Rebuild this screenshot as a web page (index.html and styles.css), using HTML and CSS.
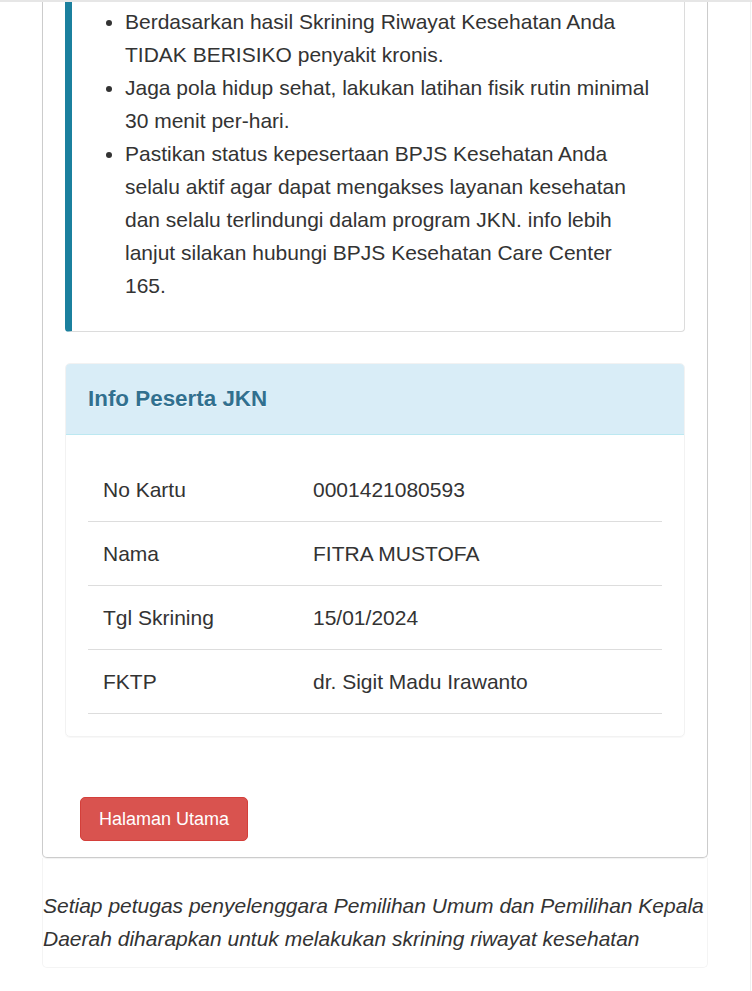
FILE: index.html
```html
<!DOCTYPE html>
<html lang="id">
<head>
<meta charset="utf-8">
<title>Hasil Skrining</title>
<link rel="stylesheet" href="styles.css">
</head>
<body>
<div class="topbar"></div>
<div class="shell">
  <div class="page">
    <div class="panel-main">
      <div class="callout">
        <ul>
          <li>Berdasarkan hasil Skrining Riwayat Kesehatan Anda TIDAK BERISIKO penyakit kronis.</li>
          <li>Jaga pola hidup sehat, lakukan latihan fisik rutin minimal 30 menit per-hari.</li>
          <li>Pastikan status kepesertaan BPJS Kesehatan Anda selalu aktif agar dapat mengakses layanan kesehatan dan selalu terlindungi dalam program JKN. info lebih lanjut silakan hubungi BPJS Kesehatan Care Center 165.</li>
        </ul>
      </div>
      <div class="info-panel">
        <div class="info-head"><h3>Info Peserta JKN</h3></div>
        <div class="info-body">
          <table class="info-table">
            <tr><td class="lbl">No Kartu</td><td>0001421080593</td></tr>
            <tr><td class="lbl">Nama</td><td>FITRA MUSTOFA</td></tr>
            <tr><td class="lbl">Tgl Skrining</td><td>15/01/2024</td></tr>
            <tr><td class="lbl">FKTP</td><td>dr. Sigit Madu Irawanto</td></tr>
          </table>
        </div>
      </div>
      <div class="actions"><a class="btn-danger" href="#">Halaman Utama</a></div>
    </div>
    <div class="footer-note">
      <p>Setiap petugas penyelenggara Pemilihan Umum dan Pemilihan Kepala Daerah diharapkan untuk melakukan skrining riwayat kesehatan</p>
    </div>
  </div>
</div>
</body>
</html>
```

FILE: styles.css
```css
html, body {
  margin: 0;
  padding: 0;
  background: #fff;
}
body {
  font-family: "Liberation Sans", Arial, sans-serif;
  font-size: 21px;
  line-height: 33px;
  color: #333;
}
.topbar {
  height: 2px;
  background: #e6e6e6;
}
.shell {
  width: 750px;
  min-height: 989px;
  border-right: 1px solid #efefef;
}
.page {
  padding-left: 42px;
  width: 666px;
}
.panel-main {
  border: 1px solid #cccccc;
  border-top: 0;
  border-radius: 0 0 5px 5px;
  padding: 0 22px;
  box-shadow: 0 1px 1px rgba(0, 0, 0, 0.06);
}
.callout {
  border: 1px solid #dcdcdc;
  border-top: 0;
  border-left: 7px solid #1b809e;
  border-radius: 0 0 4px 4px;
  padding: 3px 32px 29px 14px;
}
.callout ul {
  margin: 0;
  padding-left: 39px;
}
.info-panel {
  margin-top: 31px;
  margin-bottom: 30px;
  border: 1px solid #f2f2f2;
  border-radius: 5px;
  box-shadow: 0 1px 1px rgba(0, 0, 0, 0.03);
  overflow: hidden;
}
.info-head {
  background: #d9edf7;
  border-bottom: 1px solid #bce8f1;
  padding: 22px 22px 23px;
}
.info-head h3 {
  margin: 0;
  font-size: 22.4px;
  line-height: 25px;
  font-weight: bold;
  color: #31708f;
  text-shadow: 0 1px 0 rgba(255, 255, 255, 0.6);
}
.info-body {
  padding: 23px 22px 22px;
}
.info-table {
  width: 100%;
  border-collapse: collapse;
  table-layout: fixed;
}
.info-table td {
  padding: 15px;
  line-height: 33px;
  border-bottom: 1px solid #dddddd;
  vertical-align: top;
}
.info-table td.lbl {
  width: 210px;
  box-sizing: border-box;
}
.actions {
  display: flex;
  padding: 30px 15px 16px;
}
.btn-danger {
  display: block;
  font-size: 18px;
  line-height: 24px;
  padding: 9px 18px;
  color: #fff;
  background: #d9534f;
  border: 1px solid #d43f3a;
  border-radius: 5px;
  text-decoration: none;
}
.footer-note {
  border: 1px solid #f4f4f4;
  border-top: 0;
  border-radius: 0 0 5px 5px;
  padding: 31px 0 12px;
}
.footer-note p {
  margin: 0;
  font-style: italic;
}
```
